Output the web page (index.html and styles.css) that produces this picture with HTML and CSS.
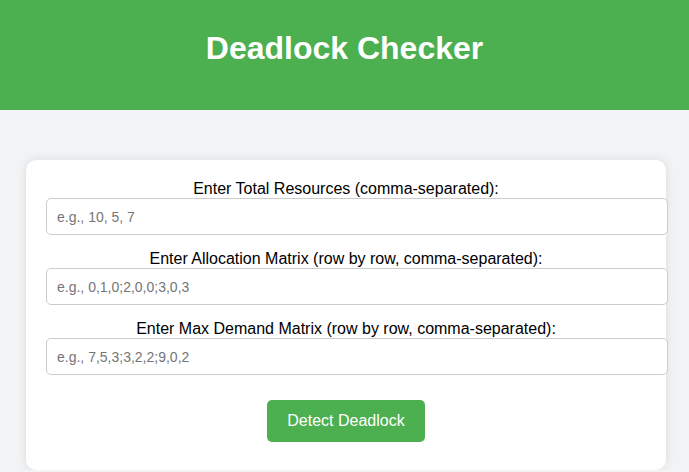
FILE: index.html
```html
<!DOCTYPE html>
<html lang="en">
<head>
<meta charset="utf-8">
<title>Deadlock Checker</title>
<link rel="stylesheet" href="styles.css">
</head>
<body>
<header class="header">
  <h1 class="title">Deadlock Checker</h1>
</header>
<main class="card">
  <label class="field-label" for="total">Enter Total Resources (comma-separated):</label>
  <input class="field-input" id="total" type="text" placeholder="e.g., 10, 5, 7">
  <label class="field-label" for="alloc">Enter Allocation Matrix (row by row, comma-separated):</label>
  <input class="field-input" id="alloc" type="text" placeholder="e.g., 0,1,0;2,0,0;3,0,3">
  <label class="field-label" for="max">Enter Max Demand Matrix (row by row, comma-separated):</label>
  <input class="field-input" id="max" type="text" placeholder="e.g., 7,5,3;3,2,2;9,0,2">
  <div class="actions">
    <button class="btn" type="button">Detect Deadlock</button>
  </div>
</main>
</body>
</html>
```

FILE: styles.css
```css
html, body {
  margin: 0;
  padding: 0;
}
body {
  background: #f2f3f5;
  font-family: "Liberation Sans", Arial, sans-serif;
  color: #000;
  overflow: hidden;
}
.header {
  background: #4caf50;
  color: #fff;
  text-align: center;
  padding: 30px 0 43px;
}
.title {
  margin: 0;
  font-size: 32px;
  font-weight: bold;
  line-height: 37px;
}
.card {
  display: block;
  width: 600px;
  margin: 50px 0 0 26px;
  padding: 20px 20px 28px;
  background: #fff;
  border-radius: 10px;
  box-shadow: 0 0 10px rgba(0, 0, 0, 0.1);
  text-align: center;
}
.field-label {
  display: block;
  font-size: 16px;
  line-height: 18px;
}
.field-input {
  display: block;
  width: 600px;
  margin: 0 0 15px;
  padding: 10px;
  box-sizing: content-box;
  height: 15px;
  font-family: "Liberation Sans", Arial, sans-serif;
  font-size: 14px;
  border: 1px solid #ccc;
  border-radius: 5px;
  outline: none;
}
.field-input::placeholder {
  color: #757575;
}
.actions {
  padding-top: 10px;
  display: flex;
  justify-content: center;
}
.btn {
  background: #4caf50;
  color: #fff;
  border: none;
  border-radius: 5px;
  padding: 12px 20px;
  height: 42px;
  font-family: "Liberation Sans", Arial, sans-serif;
  font-size: 16px;
  line-height: 18px;
  cursor: pointer;
}
```
